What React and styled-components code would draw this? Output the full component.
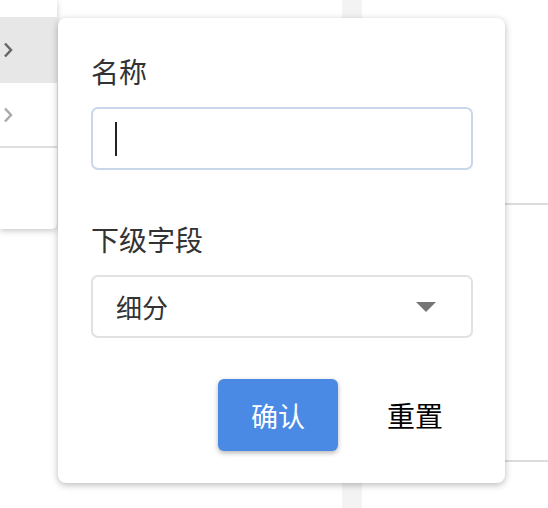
import styled, { createGlobalStyle } from "styled-components";

const GlobalStyle = createGlobalStyle`
  html, body {
    margin: 0;
    padding: 0;
    background: #fff;
  }
  body {
    font-family: "Noto Sans CJK SC", "Noto Sans", sans-serif;
  }
`;

const Page = styled.div`
  position: relative;
  width: 548px;
  height: 508px;
  overflow: hidden;
  display: flex;
`;

const Spacer = styled.div`
  width: 342px;
  flex-shrink: 0;
`;

const Strip = styled.div`
  width: 20px;
  flex-shrink: 0;
  background: #f3f3f3;
`;

const Table = styled.div`
  flex: 1;
  display: flex;
  flex-direction: column;
`;

const TableRow = styled.div`
  height: ${(p) => p.h}px;
  border-bottom: 2px solid #dcdcdc;
  box-sizing: border-box;
`;

const Menu = styled.div`
  position: absolute;
  left: 0;
  top: 0;
  width: 57px;
  height: 229px;
  background: #fff;
  border-bottom-right-radius: 5px;
  box-shadow: 0 2px 6px rgba(0, 0, 0, 0.22);
  padding-top: 17px;
  box-sizing: border-box;
`;

const MenuItem = styled.div`
  height: ${(p) => p.h}px;
  display: flex;
  align-items: center;
  padding-left: 1px;
  background: ${(p) => (p.active ? "#e7e7e7" : "transparent")};
  border-bottom: ${(p) => (p.divider ? "2px solid #dedede" : "none")};
  box-sizing: border-box;
`;

const Card = styled.div`
  position: absolute;
  left: 58px;
  top: 18px;
  width: 447px;
  height: 465px;
  box-sizing: border-box;
  background: #fff;
  border-radius: 8px;
  box-shadow: 0 2px 7px rgba(0, 0, 0, 0.28);
  padding: 33px 32px 32px 33px;
  display: flex;
  flex-direction: column;
`;

const Label = styled.div`
  font-size: 28px;
  line-height: 40px;
  color: #333;
  margin-top: ${(p) => p.top || 0}px;
  margin-bottom: 16px;
`;

const Field = styled.div`
  height: 63px;
  flex-shrink: 0;
  box-sizing: border-box;
  border-radius: 7px;
  border: 2px solid ${(p) => (p.focused ? "#c9d7ea" : "#e1e1e1")};
  display: flex;
  align-items: center;
  padding: 0 35px 0 ${(p) => (p.focused ? 22 : 23)}px;
  font-size: 26px;
  color: #333;
`;

const Caret = styled.span`
  width: 2px;
  height: 34px;
  background: #222;
`;

const Value = styled.span`
  flex: 1;
`;

const Actions = styled.div`
  margin-top: 41px;
  display: flex;
  justify-content: flex-end;
  align-items: center;
  gap: 19px;
`;

const PrimaryButton = styled.button`
  width: 120px;
  height: 72px;
  border: none;
  border-radius: 6px;
  background: #4a8ae4;
  color: #fff;
  font-family: inherit;
  font-size: 27px;
  box-shadow: 0 2px 5px rgba(0, 0, 0, 0.3);
  cursor: pointer;
`;

const TextButton = styled.button`
  height: 72px;
  border: none;
  background: none;
  padding: 0 30px;
  font-family: inherit;
  font-size: 28px;
  color: #000;
  cursor: pointer;
`;

const Chevron = ({ color }) => (
  <svg width="14" height="16" viewBox="0 0 14 16">
    <path d="M4 1.5 L10 8 L4 14.5" fill="none" stroke={color} strokeWidth="2.5" />
  </svg>
);

const Triangle = () => (
  <svg width="20" height="10" viewBox="0 0 20 10">
    <path d="M0 0 H20 L10 10 Z" fill="#767676" />
  </svg>
);

export default function App() {
  return (
    <>
      <GlobalStyle />
      <Page>
        <Spacer />
        <Strip />
        <Table>
          <TableRow h={205} />
          <TableRow h={257} />
        </Table>

        <Menu>
          <MenuItem h={66} active>
            <Chevron color="#666" />
          </MenuItem>
          <MenuItem h={65} divider>
            <Chevron color="#aaa" />
          </MenuItem>
        </Menu>

        <Card>
          <Label>名称</Label>
          <Field focused>
            <Caret />
          </Field>
          <Label top={49}>下级字段</Label>
          <Field>
            <Value>细分</Value>
            <Triangle />
          </Field>
          <Actions>
            <PrimaryButton>确认</PrimaryButton>
            <TextButton>重置</TextButton>
          </Actions>
        </Card>
      </Page>
    </>
  );
}
